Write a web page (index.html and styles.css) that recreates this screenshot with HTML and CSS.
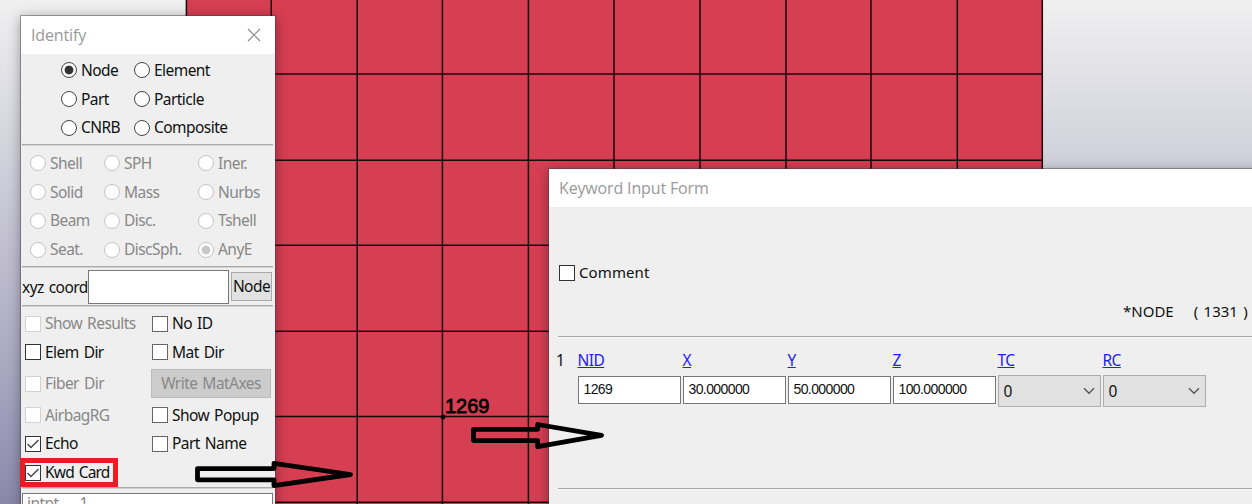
FILE: index.html
```html
<!DOCTYPE html>
<html lang="en">
<head>
<meta charset="utf-8">
<title>Identify</title>
<link rel="stylesheet" href="styles.css">
</head>
<body>
<main class="desktop">
  <svg class="mesh" width="1252" height="504" viewBox="0 0 1252 504">
    <rect x="186" y="0" width="857" height="504" fill="#d63e52"/>
    <path class="mesh-lines" d="M186.4 0V504M271.2 0V504M357.2 0V504M442.4 0V504M528.4 0V504M614 0V504M700 0V504M786 0V504M871 0V504M957.3 0V504M1042.3 0V504M186 73.9H1043M186 160.3H1043M186 245.3H1043M186 331.3H1043M186 416.4H1043M186 502.3H1043"/>
    <circle cx="443" cy="417" r="2.4"/>
    <text class="node-id" x="445" y="413">1269</text>
  </svg>

  <section class="window identify">
    <header class="titlebar"><span>Identify</span>
      <svg class="close" width="14" height="14" viewBox="0 0 14 14"><path d="M1 1L13 13M13 1L1 13"/></svg>
    </header>
    <div class="entity">
      <label class="opt"><i class="radio on"></i><span>Node</span></label><label class="opt"><i class="radio"></i><span>Element</span></label>
      <label class="opt"><i class="radio"></i><span>Part</span></label><label class="opt"><i class="radio"></i><span>Particle</span></label>
      <label class="opt"><i class="radio"></i><span>CNRB</span></label><label class="opt"><i class="radio"></i><span>Composite</span></label>
    </div>
    <div class="rule"></div>
    <div class="types disabled">
      <label class="opt"><i class="radio"></i><span>Shell</span></label><label class="opt"><i class="radio"></i><span>SPH</span></label><label class="opt"><i class="radio"></i><span>Iner.</span></label>
      <label class="opt"><i class="radio"></i><span>Solid</span></label><label class="opt"><i class="radio"></i><span>Mass</span></label><label class="opt"><i class="radio"></i><span>Nurbs</span></label>
      <label class="opt"><i class="radio"></i><span>Beam</span></label><label class="opt"><i class="radio"></i><span>Disc.</span></label><label class="opt"><i class="radio"></i><span>Tshell</span></label>
      <label class="opt"><i class="radio"></i><span>Seat.</span></label><label class="opt"><i class="radio"></i><span>DiscSph.</span></label><label class="opt"><i class="radio on"></i><span>AnyE</span></label>
    </div>
    <div class="rule"></div>
    <div class="coord"><span class="coord-label">xyz coord</span><div class="coord-input"></div><div class="node-button">Node</div></div>
    <div class="rule"></div>
    <div class="checks">
      <label class="opt disabled"><i class="check"></i><span>Show Results</span></label><label class="opt"><i class="check"></i><span>No ID</span></label>
      <label class="opt"><i class="check dark"></i><span>Elem Dir</span></label><label class="opt"><i class="check"></i><span>Mat Dir</span></label>
      <label class="opt disabled"><i class="check"></i><span>Fiber Dir</span></label><div class="write">Write MatAxes</div>
      <label class="opt disabled"><i class="check"></i><span>AirbagRG</span></label><label class="opt"><i class="check"></i><span>Show Popup</span></label>
      <label class="opt"><i class="check dark"><svg width="14" height="14" viewBox="0 0 14 14"><path d="M1.5 7L5 10.5L12.5 3"/></svg></i><span>Echo</span></label><label class="opt"><i class="check"></i><span>Part Name</span></label>
      <label class="opt"><i class="check dark"><svg width="14" height="14" viewBox="0 0 14 14"><path d="M1.5 7L5 10.5L12.5 3"/></svg></i><span class="tight">Kwd Card</span></label>
    </div>
    <div class="rule"></div>
    <div class="list"><span>intpt</span><span>1</span></div>
  </section>

  <section class="window keyword">
    <header class="titlebar">Keyword Input Form</header>
    <label class="comment"><i class="check dark"></i><span>Comment</span></label>
    <div class="card-name"><span>*NODE</span><span class="count">( 1331 )</span></div>
    <div class="rule"></div>
    <div class="card">
      <span class="row-no">1</span>
      <div class="field"><a>NID</a><div class="value">1269</div></div>
      <div class="field"><a>X</a><div class="value">30.000000</div></div>
      <div class="field"><a>Y</a><div class="value">50.000000</div></div>
      <div class="field"><a>Z</a><div class="value">100.000000</div></div>
      <div class="field"><a>TC</a><div class="select"><span>0</span><svg width="12" height="8" viewBox="0 0 12 8"><path d="M1 1.3L6 6.3L11 1.3"/></svg></div></div>
      <div class="field"><a>RC</a><div class="select"><span>0</span><svg width="12" height="8" viewBox="0 0 12 8"><path d="M1 1.3L6 6.3L11 1.3"/></svg></div></div>
    </div>
    <div class="rule light"></div>
  </section>

  <div class="highlight"></div>
  <svg class="arrows" width="1252" height="504" viewBox="0 0 1252 504">
    <path d="M197.5 468.6H274V463.3L350.5 474.5L274 485.6V479.8H197.5Z"/>
    <path d="M473.5 429.3H537.7V424.5L601.5 435.3L537.7 446.7V440.6H473.5Z"/>
  </svg>
</main>
</body>
</html>
```
FILE: styles.css
```css
* { box-sizing: border-box; }
body { margin: 0; overflow: hidden; }
.desktop {
  position: relative;
  width: 1252px;
  height: 504px;
  overflow: hidden;
  background: linear-gradient(#f0f0f0 0, #d1d1dc 160px, #bfbccd 260px, #a6a6c0 380px, #8a88aa 504px);
  font: 15.5px/20px "Noto Sans", sans-serif;
  letter-spacing: -0.55px;
  word-spacing: 1.5px;
  color: #111;
}
.mesh { display: block; }
.mesh-lines { stroke: #160a0d; stroke-width: 1.5; fill: none; }
.node-id { font: 20px "Liberation Sans", sans-serif; letter-spacing: 0; stroke: #000; stroke-width: .8; }
.window {
  position: absolute;
  background: #efefef;
  box-shadow: 0 0 0 1px rgba(70, 60, 70, .45), 0 2px 12px rgba(0, 0, 0, .38);
}
.identify { left: 21px; top: 16px; width: 254px; height: 500px; }
.keyword { left: 549px; top: 169px; width: 720px; height: 350px; }
.titlebar {
  display: flex;
  align-items: center;
  justify-content: space-between;
  height: 38px;
  padding: 0 14px 1px 10px;
  background: #fff;
  color: #999;
  font: 16px/22px "Open Sans", sans-serif;
  letter-spacing: -0.15px;
  word-spacing: 0;
}
.close path { stroke: #888; stroke-width: 1.1; fill: none; }
.rule { height: 2px; margin: 0 2px 0 1px; background: #aaa; border-bottom: 1px solid #d2d2d2; }
.opt { display: flex; align-items: center; gap: 4px; white-space: nowrap; }
.opt span { padding-bottom: 1px; }
.comment span { padding-bottom: 2px; }
.opt .tight { letter-spacing: -0.8px; }
.disabled { color: #888; }
.radio { flex: none; width: 16px; height: 16px; border: 1px solid #444; border-radius: 50%; background: #fff; }
.radio.on { background: radial-gradient(circle, #333 4px, #fff 4.8px); }
.disabled .radio { border-color: #c4c4c4; }
.disabled .radio.on { background: radial-gradient(circle, #c8c8c8 4px, #fff 4.8px); }
.check { flex: none; display: block; width: 16px; height: 16px; border: 1px solid #666; background: #fff; }
.check.dark { border-color: #333; }
.check svg { display: block; }
.check path { stroke: #444; stroke-width: 1.4; fill: none; }
.disabled .check { border-color: #d2d2d2; }
.entity { display: grid; grid-template-columns: 73px 1fr; grid-auto-rows: 28.7px; height: 90px; padding: 2px 0 0 40px; }
.types { display: grid; grid-template-columns: 74px 94px 1fr; grid-auto-rows: 28.8px; height: 120px; padding: 3px 0 0 9px; }
.coord { display: flex; align-items: center; height: 37px; padding-left: 1px; }
.coord-label { width: 66px; white-space: nowrap; }
.coord-input { width: 141px; height: 34px; border: 1px solid #777; background: #fff; }
.node-button { width: 41px; height: 29px; margin-left: 2px; border: 1px solid #aaa; background: #e1e1e1; line-height: 27px; text-align: center; }
.checks { display: grid; grid-template-columns: 127px 1fr; grid-template-rows: 29px 28px 35px 28px 29px 29px; height: 180px; padding: 2px 0 0 4px; }
.write { align-self: center; width: 120px; height: 29px; margin-left: -1px; border: 1px solid #bcbcbc; background: #ccc; color: #888; line-height: 27px; text-align: center; }
.list { display: flex; gap: 21px; height: 40px; margin: 4px 2px 0 1px; padding: 0 4px; border: 1px solid #777; background: #fff; color: #888; line-height: 18px; }
.keyword .rule { margin: 0 0 0 9px; border-bottom-color: #f8f8f8; }
.comment { display: flex; align-items: center; gap: 4px; height: 28px; margin: 52px 0 0 10px; font-size: 15px; letter-spacing: .1px; }
.card-name { display: flex; height: 49px; padding: 14px 0 0 574px; font-size: 15px; letter-spacing: 0; }
.count { margin-left: 20px; white-space: pre; }
.card { display: flex; height: 150px; padding: 12px 0 0 7px; }
.row-no { width: 21.5px; }
.field { width: 105px; }
.field a { display: block; width: fit-content; color: #2121f5; text-decoration: underline; }
.value { width: 103px; height: 28px; margin-top: 6px; padding-left: 5px; border: 1px solid #777; background: #fff; font: 14px/24px "Liberation Sans", sans-serif; letter-spacing: -0.6px; }
.select { display: flex; align-items: center; justify-content: space-between; width: 103px; height: 32px; margin-top: 5px; padding: 0 5px; border: 1px solid #adadad; background: #e1e1e1; }
.select span { padding-bottom: 1px; }
.select path { stroke: #555; stroke-width: 1.4; fill: none; }
.highlight { position: absolute; left: 20px; top: 458px; width: 98px; height: 29px; border: 5px solid #ed1c24; }
.arrows { position: absolute; left: 0; top: 0; }
.arrows path { fill: none; stroke: #000; stroke-width: 4.8; stroke-linejoin: round; }
```
